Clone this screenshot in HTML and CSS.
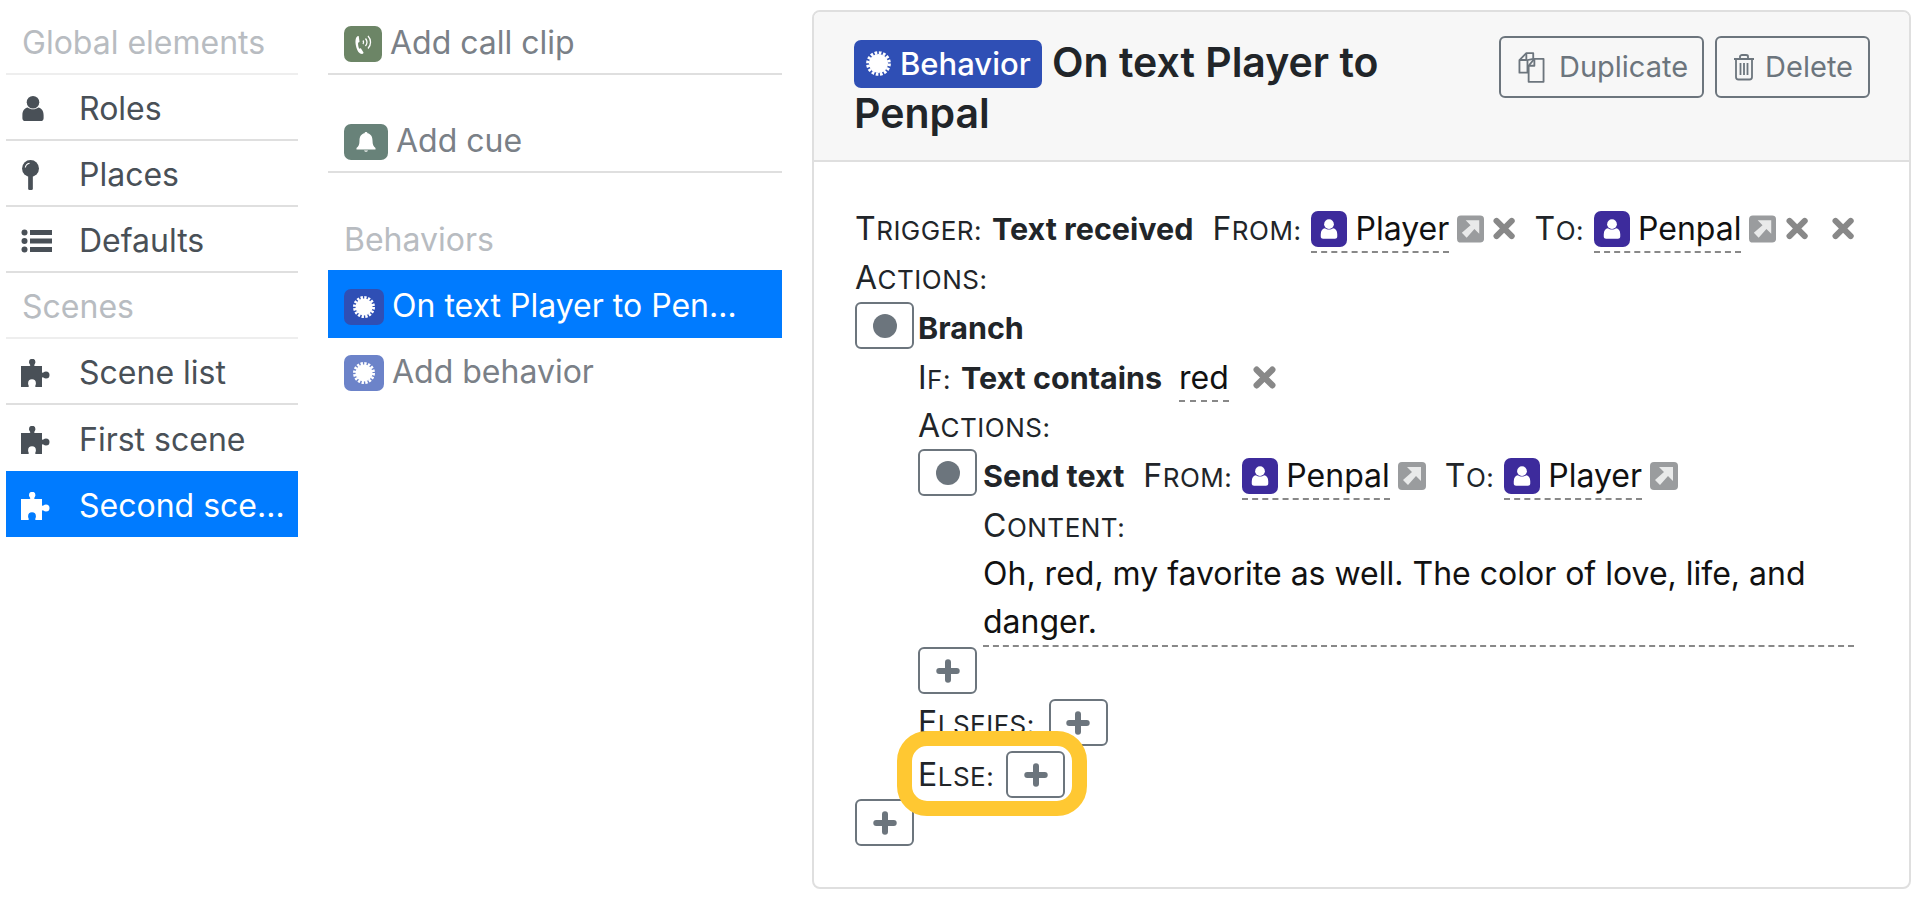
FILE: index.html
```html
<!DOCTYPE html>
<html lang="en">
<head>
    <meta charset="UTF-8">
    <meta name="viewport" content="width=device-width, initial-scale=1.0">
    <title>Behavior - On text Player to Penpal</title>
    <link rel="stylesheet" href="styles.css">
</head>
<body>
    <svg class="defs" width="0" height="0" aria-hidden="true">
        <symbol id="i-user" viewBox="0 0 24 28">
            <circle cx="12" cy="7.5" r="6.5" fill="currentColor"/>
            <path d="M1 21c0-5 2.500-7.500 5.500-8 1.500 1.200 3.500 1.800 5.500 1.800s4-.6 5.500-1.800c3 .5 5.500 3 5.500 8v3c0 2-1.500 3-3 3H4c-1.500 0-3-1-3-3z" fill="currentColor"/>
        </symbol>
        <symbol id="i-pin" viewBox="0 0 20 34">
            <circle cx="10" cy="10" r="9" fill="currentColor"/>
            <rect x="7.500" y="16" width="5" height="17" rx="1.500" fill="currentColor"/>
            <path d="M4.500 9a5.500 5.500 0 0 1 4.500-4.500" fill="none" stroke="#fff" stroke-width="1.200"/>
        </symbol>
        <symbol id="i-list" viewBox="0 0 32 24">
            <circle cx="3.500" cy="3.500" r="3" fill="currentColor"/>
            <circle cx="3.500" cy="12" r="3" fill="currentColor"/>
            <circle cx="3.500" cy="20.500" r="3" fill="currentColor"/>
            <rect x="9" y="1" width="22" height="5" fill="currentColor"/>
            <rect x="9" y="9.500" width="22" height="5" fill="currentColor"/>
            <rect x="9" y="18" width="22" height="5" fill="currentColor"/>
        </symbol>
        <symbol id="i-puzzle" viewBox="0 0 30 28">
            <path d="M0 7h8.500c.8 0 1-.6.600-1.300C8 4.500 8 3.500 8 3a3.200 3.200 0 0 1 6.400 0c0 .5-.1 1.500-1 2.700-.5.700-.2 1.300.6 1.300H21v6c0 .9.700 1.100 1.300.6.900-.8 1.800-1.100 2.700-1.100a3.500 3.500 0 0 1 0 7c-.9 0-1.800-.3-2.700-1.100-.6-.5-1.300-.3-1.300.6V28h-6c-.9 0-1-.6-.7-1.300.5-1 .6-2 .6-2.500a3.900 3.900 0 0 0-7.800 0c0 .5.100 1.500.6 2.500.3.700.2 1.300-.7 1.300H0z" fill="currentColor"/>
        </symbol>
        <symbol id="i-burst" viewBox="0 0 24 24">
            <circle cx="12" cy="12" r="8.500" fill="currentColor"/>
            <circle cx="12" cy="12" r="9.500" fill="none" stroke="currentColor" stroke-width="3" stroke-dasharray="2.330 1.400"/>
        </symbol>
        <symbol id="i-ext" viewBox="0 0 28 28">
            <rect width="28" height="28" rx="4" fill="currentColor"/>
            <path d="M9 5h14v14l-5-5-8 9-5-5 9-8z" fill="#e9eaea"/>
        </symbol>
        <symbol id="i-x" viewBox="0 0 22 22">
            <path d="M3.500 3.500l15 15M18.500 3.500l-15 15" stroke="currentColor" stroke-width="6" stroke-linecap="round" fill="none"/>
        </symbol>
        <symbol id="i-plus" viewBox="0 0 22 22">
            <path d="M11 3v16M3 11h16" stroke="currentColor" stroke-width="5.500" stroke-linecap="round" fill="none"/>
        </symbol>
    </svg>

    <div class="page">
        <nav class="col-left">
            <div class="nav-head">Global elements</div>
            <a class="nav-row"><svg class="nav-icon ic-user"><use href="#i-user"/></svg>Roles</a>
            <a class="nav-row"><svg class="nav-icon ic-pin"><use href="#i-pin"/></svg>Places</a>
            <a class="nav-row"><svg class="nav-icon ic-list"><use href="#i-list"/></svg>Defaults</a>
            <div class="nav-head">Scenes</div>
            <a class="nav-row"><svg class="nav-icon"><use href="#i-puzzle"/></svg>Scene list</a>
            <a class="nav-row no-line"><svg class="nav-icon"><use href="#i-puzzle"/></svg>First scene</a>
            <a class="nav-row active"><svg class="nav-icon"><use href="#i-puzzle"/></svg><span class="clip">Second scene</span></a>
        </nav>

        <div class="col-mid">
            <a class="mid-row lined">
                <span class="badge badge-call">
                    <svg class="badge-glyph" viewBox="0 0 24 24" fill="none" stroke="#fff">
                        <path d="M7 4c-2.500 1-3 5-2 10s3.500 8 6 8c1 0 1.500-1 1.500-1.500l-2.500-4c-.5-.5-1.200-.2-1.700.2-.8-1-1.500-5-1.100-6.300.6 0 1.300-.3 1.300-1L7.800 4.500C7.600 4 7.300 3.900 7 4z" fill="#fff" stroke="none"/>
                        <path d="M12 8.500a3 3 0 0 1 0 3.500M14.500 6.500a6 6 0 0 1 0 7.500M17 4a9 9 0 0 1 0 12.500" stroke-width="1.300"/>
                    </svg>
                </span>
                Add call clip
            </a>
            <a class="mid-row lined spaced">
                <span class="badge badge-cue">
                    <svg class="badge-glyph" viewBox="0 0 24 24">
                        <path d="M12 2c1 0 1.500.6 1.500 1.300C17 4 18.500 7 18.500 10.500c0 4 1 6 3 7.500v1.500h-19V18c2-1.500 3-3.500 3-7.500C5.500 7 7 4 10.500 3.300 10.500 2.600 11 2 12 2z" fill="#fff"/>
                        <path d="M10 20.500a2.200 2.200 0 0 0 4 0z" fill="#fff"/>
                    </svg>
                </span>
                Add cue
            </a>
            <div class="mid-head">Behaviors</div>
            <a class="mid-row active">
                <span class="badge badge-behavior"><svg class="badge-glyph"><use href="#i-burst"/></svg></span>
                <span class="clip">On text Player to Penpal</span>
            </a>
            <a class="mid-row mid-last">
                <span class="badge badge-behavior faded"><svg class="badge-glyph"><use href="#i-burst"/></svg></span>
                Add behavior
            </a>
        </div>

        <main class="panel">
            <header class="panel-head">
                <h1 class="panel-title"><span class="tag"><svg class="tag-icon"><use href="#i-burst"/></svg>Behavior</span> On text Player to Penpal</h1>
                <div class="head-btns">
                    <button class="btn btn-copy">
                        <svg class="btn-icon icon-copy" viewBox="1 1 23 27" fill="none" stroke="currentColor" stroke-width="1.600" stroke-linejoin="round">
                            <path d="M8 2h6v5l-5 1v11H2V8z"/>
                            <path d="M8 2v6H2"/>
                            <path d="M15 7h8v20H10V13z"/>
                            <path d="M15 7v6h-5"/>
                        </svg>
                        Duplicate
                    </button>
                    <button class="btn btn-tight">
                        <svg class="btn-icon icon-trash" viewBox="0 0 24 28" fill="none" stroke="currentColor" stroke-width="1.800">
                            <path d="M2 6h20M8 6V3.500C8 2.500 9 2 10 2h4c1 0 2 .5 2 1.500V6M4 6v18c0 1.500 1 2.500 2.500 2.500h11c1.500 0 2.500-1 2.500-2.500V6"/>
                            <path d="M8.500 10v12M12 10v12M15.500 10v12"/>
                        </svg>
                        Delete
                    </button>
                </div>
            </header>

            <div class="panel-body">
                <div class="line">
                    <span class="label">Trigger:</span>
                    <b class="kind">Text received</b>
                    <span class="label spaced-label">From:</span>
                    <span class="value"><span class="role"><svg class="role-glyph"><use href="#i-user"/></svg></span>Player</span>
                    <svg class="ext"><use href="#i-ext"/></svg>
                    <svg class="remove"><use href="#i-x"/></svg>
                    <span class="label spaced-label">To:</span>
                    <span class="value"><span class="role"><svg class="role-glyph"><use href="#i-user"/></svg></span>Penpal</span>
                    <svg class="ext"><use href="#i-ext"/></svg>
                    <svg class="remove"><use href="#i-x"/></svg>
                    <svg class="remove far"><use href="#i-x"/></svg>
                </div>
                <div class="line"><span class="label">Actions:</span></div>

                <div class="action">
                    <button class="handle"><span class="dot"></span></button>
                    <div class="action-body">
                        <div class="line line-first"><b class="kind">Branch</b></div>
                        <div class="line">
                            <span class="label">If:</span>
                            <b class="kind">Text contains</b>
                            <span class="value value-text">red</span>
                            <svg class="remove far"><use href="#i-x"/></svg>
                        </div>
                        <div class="line line-tight"><span class="label">Actions:</span></div>

                        <div class="action action-nested">
                            <button class="handle"><span class="dot"></span></button>
                            <div class="action-body">
                                <div class="line line-send">
                                    <b class="kind">Send text</b>
                                    <span class="label spaced-label">From:</span>
                                    <span class="value"><span class="role"><svg class="role-glyph"><use href="#i-user"/></svg></span>Penpal</span>
                                    <svg class="ext"><use href="#i-ext"/></svg>
                                    <span class="label spaced-label">To:</span>
                                    <span class="value"><span class="role"><svg class="role-glyph"><use href="#i-user"/></svg></span>Player</span>
                                    <svg class="ext"><use href="#i-ext"/></svg>
                                </div>
                                <div class="line line-content"><span class="label">Content:</span></div>
                                <div class="content-text">Oh, red, my favorite as well. The color of love, life, and danger.</div>
                            </div>
                        </div>
                        <button class="handle add"><svg class="plus"><use href="#i-plus"/></svg></button>
                        <div class="line line-btn elseifs">
                            <span class="label">Elseifs:</span>
                            <button class="handle add"><svg class="plus"><use href="#i-plus"/></svg></button>
                        </div>
                        <div class="line line-btn else-row">
                            <span class="label">Else:</span>
                            <button class="handle add"><svg class="plus"><use href="#i-plus"/></svg></button>
                            <div class="highlight"></div>
                        </div>
                    </div>
                </div>
                <button class="handle add root-add"><svg class="plus"><use href="#i-plus"/></svg></button>
            </div>
        </main>
    </div>
</body>
</html>
```

FILE: styles.css
```css
* {
    box-sizing: border-box;
}

body {
    font-family: "Inter", "Noto Sans", sans-serif;
    font-size: 32px;
    line-height: 1.5;
    margin: 0;
    background-color: #fff;
    color: #212529;
}

.defs {
    position: absolute;
}

.page {
    display: flex;
    align-items: flex-start;
    padding: 9px 11px 0 6px;
    gap: 30px;
}

/* left nav */
.col-left {
    width: 292px;
    flex: none;
}

.nav-head {
    height: 66px;
    padding: 3px 16px 0;
    display: flex;
    align-items: center;
    color: #b8bcc1;
    border-bottom: 2px solid #eeeeee;
    white-space: nowrap;
}

.nav-row {
    height: 66px;
    padding: 3px 13px 0 15px;
    display: flex;
    align-items: center;
    color: #495057;
    border-bottom: 2px solid #dfdfdf;
}

.nav-row.no-line {
    border-bottom: none;
}

.nav-row.active {
    background-color: #007bff;
    color: #fff;
    border-bottom: none;
}

.nav-icon {
    width: 30px;
    height: 28px;
    margin-right: 28px;
    flex: none;
}

.ic-user {
    width: 24px;
    height: 27px;
    margin-right: 34px;
}

.ic-pin {
    width: 19px;
    height: 32px;
    margin-right: 39px;
}

.ic-list {
    width: 32px;
    height: 24px;
    margin-right: 26px;
}

.clip {
    white-space: nowrap;
    overflow: hidden;
    text-overflow: ellipsis;
}

/* middle list */
.col-mid {
    width: 454px;
    flex: none;
}

.mid-row {
    height: 68px;
    padding: 3px 34px 0 16px;
    display: flex;
    align-items: center;
    color: #7a8087;
}

.mid-row.lined {
    height: 66px;
    border-bottom: 2px solid #dfdfdf;
}

.mid-row.spaced {
    margin-top: 32px;
}

.mid-row.active {
    background-color: #007bff;
    color: #fff;
}

.mid-row.mid-last {
    height: 64px;
}

.mid-head {
    height: 97px;
    padding: 0 16px 6px;
    display: flex;
    align-items: flex-end;
    color: #b8bcc1;
}

.badge {
    height: 36px;
    width: 40px;
    margin: 3px 8px 0 0;
    flex: none;
    border-radius: 7px;
    display: flex;
    align-items: center;
    justify-content: center;
    color: #fff;
}

.badge-call {
    width: 38px;
    background-color: #6c8566;
}

.badge-cue {
    width: 44px;
    background-color: #688279;
}

.badge-behavior {
    background-color: #2f4fb5;
}

.badge-behavior.faded {
    background-color: #6c83c9;
}

.badge-glyph {
    width: 24px;
    height: 24px;
}

/* right panel */
.panel {
    flex: 1;
    min-width: 0;
    height: 879px;
    border: 2px solid #dfdfdf;
    border-radius: 8px;
    margin-top: 1px;
}

.panel-head {
    height: 150px;
    padding: 25px 39px 0 40px;
    display: flex;
    align-items: flex-start;
    background-color: #f7f7f7;
    border-bottom: 2px solid #dfdfdf;
    border-radius: 6px 6px 0 0;
}

.panel-title {
    flex: 1;
    margin: 0 20px 0 0;
    font-size: 41px;
    font-weight: 600;
    line-height: 51px;
    color: #212529;
}

.tag {
    display: inline-flex;
    align-items: center;
    height: 48px;
    padding: 0 11px;
    border-radius: 7px;
    background-color: #2f4fb5;
    color: #fff;
    font-size: 31px;
    font-weight: 500;
}

.tag-icon {
    width: 27px;
    height: 27px;
    margin-right: 8px;
}

.head-btns {
    display: flex;
    gap: 11px;
    margin-top: -1px;
}

.btn {
    height: 62px;
    padding: 0 16px;
    display: flex;
    align-items: center;
    font: inherit;
    font-size: 29px;
    color: #6c757d;
    background: transparent;
    border: 2px solid #6c757d;
    border-radius: 6px;
}

.btn-copy {
    padding-right: 14px;
}

.btn-tight {
    padding: 0 15px;
}

.btn-icon {
    width: 28px;
    height: 28px;
}

.icon-copy {
    width: 29px;
    height: 31px;
    margin-right: 13px;
}

.icon-trash {
    width: 24px;
    margin-right: 9px;
}

.panel-body {
    padding: 42px 55px 0 41px;
    color: #111;
}

.line {
    height: 49px;
    display: flex;
    align-items: center;
    white-space: nowrap;
}

.line-first {
    height: 51px;
}

.line-tight {
    height: 47px;
}

.line-send {
    height: 53px;
}

.line-content {
    height: 48px;
}

.label {
    text-transform: uppercase;
    font-size: 26px;
    color: #212529;
    margin-right: 10px;
    letter-spacing: 0.5px;
}

.label::first-letter {
    font-size: 32px;
}

.spaced-label {
    margin-left: 19px;
}

.kind {
    font-size: 30.5px;
    font-weight: 700;
    color: #212529;
}

.value {
    display: flex;
    align-items: center;
    height: 46px;
    border-bottom: 2px dashed #888;
    margin-top: 2px;
}

.value-text {
    margin-left: 17px;
}

.role {
    width: 36px;
    height: 36px;
    margin-right: 8px;
    border-radius: 7px;
    background-color: #3d2b9c;
    color: #fff;
    display: flex;
    align-items: center;
    justify-content: center;
}

.role-glyph {
    width: 18px;
    height: 22px;
}

.ext {
    width: 28px;
    height: 28px;
    margin-left: 8px;
    color: #9a9c9e;
}

.remove {
    width: 23px;
    height: 23px;
    margin-left: 9px;
    color: #888;
}

.remove.far {
    margin-left: 24px;
}

.handle {
    width: 59px;
    height: 47px;
    padding: 0;
    flex: none;
    display: flex;
    align-items: center;
    justify-content: center;
    background: transparent;
    border: 2px solid #6c757d;
    border-radius: 6px;
}

.dot {
    width: 24px;
    height: 24px;
    border-radius: 50%;
    background-color: #6c757d;
}

.plus {
    width: 24px;
    height: 24px;
    color: #6c757d;
}

.action {
    display: flex;
    gap: 4px;
}

.action-nested {
    gap: 6px;
}

.action-body {
    flex: 1;
    min-width: 0;
}

.content-text {
    line-height: 47.5px;
    border-bottom: 2px dashed #888;
}

.line-btn {
    height: 47px;
}

.elseifs {
    margin-top: 5px;
}

.elseifs .label {
    margin-right: 14px;
}

.else-row {
    margin-top: 5px;
    position: relative;
}

.else-row .label {
    margin-right: 12px;
}

.highlight {
    position: absolute;
    left: -21px;
    top: -20px;
    width: 190px;
    height: 85px;
    border: 15px solid #ffc832;
    border-radius: 30px;
}

.root-add {
    margin-top: 1px;
}
```
